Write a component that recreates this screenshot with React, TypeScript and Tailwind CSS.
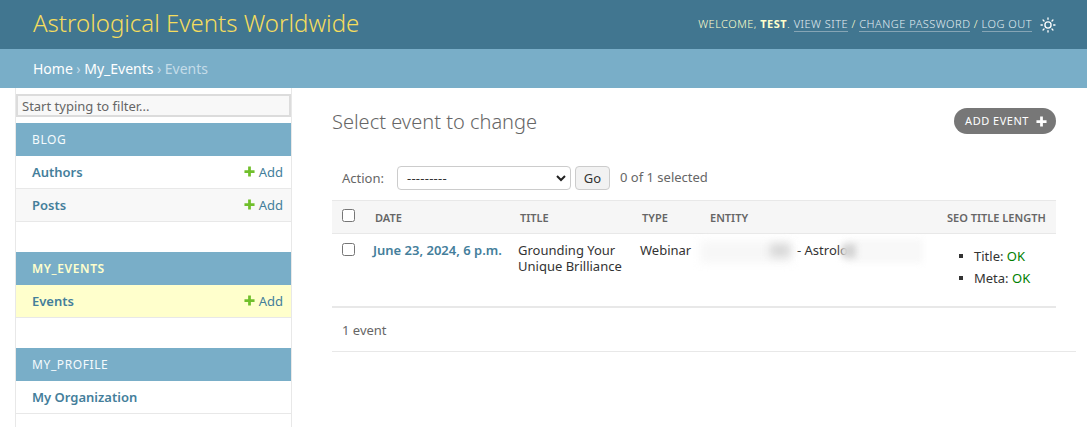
import React from "react";

const font = { fontFamily: '"Noto Sans", sans-serif' };

function Plus({ className }: { className?: string }) {
  return (
    <svg viewBox="0 0 12 12" className={className} aria-hidden="true">
      <path d="M4.5 0.5h3v4h4v3h-4v4h-3v-4h-4v-3h4z" fill="currentColor" />
    </svg>
  );
}

function SideRow({ label, add, tone }: { label: string; add?: boolean; tone?: "alt" | "current" }) {
  const bg = tone === "alt" ? "bg-[#f8f8f8]" : tone === "current" ? "bg-[#ffffcc]" : "bg-white";
  return (
    <div className={`flex h-[33px] items-center justify-between border-b border-[#e8e8e8] pl-4 pr-2 pt-[1px] text-[13px] ${bg}`}>
      <span className="font-semibold text-[#447e9b]">{label}</span>
      {add && (
        <span className="flex items-center gap-[4px] text-[#447e9b]">
          <Plus className="mb-[3px] h-[11px] w-[11px] text-[#70bf2b]" />
          Add
        </span>
      )}
    </div>
  );
}

function SideGroup({ title, current, children }: { title: string; current?: boolean; children: React.ReactNode }) {
  return (
    <div className="mb-[30px]">
      <div className={`flex h-[33px] items-center bg-[#79aec8] pl-4 text-[12px] tracking-[0.6px] ${current ? "font-semibold text-[#ffffcc]" : "text-[#f5fbfd]"}`}>
        {title}
      </div>
      {children}
    </div>
  );
}

export default function App() {
  return (
    <div style={font} className="h-[427px] w-[1087px] overflow-hidden bg-white text-[13px] text-[#333]">
      <header className="flex h-[49px] items-center justify-between bg-[#417690] pl-[33px] pr-[31px]">
        <div className="pb-[3px] text-[24px] font-light leading-none text-[#f5dd5d]">Astrological Events Worldwide</div>
        <div className="flex items-center text-[11px] font-light tracking-[0.5px] text-[#ffffcc]">
          <span>
            WELCOME, <strong className="font-bold">TEST</strong>.{" "}
            <span className="border-b border-[#86a5b5] text-[#e3eef3]">VIEW SITE</span> /{" "}
            <span className="border-b border-[#86a5b5] text-[#e3eef3]">CHANGE PASSWORD</span> /{" "}
            <span className="border-b border-[#86a5b5] text-[#e3eef3]">LOG OUT</span>
          </span>
          <svg viewBox="0 0 24 24" className="ml-[8px] h-[16px] w-[16px] text-white" fill="none" stroke="currentColor" strokeWidth="2" strokeLinecap="round">
            <circle cx="12" cy="12" r="4.6" />
            <path d="M12 1.5v2M12 20.5v2M1.5 12h2M20.5 12h2M4.6 4.6l1.4 1.4M18 18l1.4 1.4M4.6 19.4L6 18M18 6l1.4-1.4" />
          </svg>
        </div>
      </header>

      <div className="flex h-[39px] items-center bg-[#79aec8] pl-[33px] text-[14px] text-[#c4dce8]">
        <span className="text-white">Home</span>
        <span className="mx-[3.5px]">›</span>
        <span className="text-white">My_Events</span>
        <span className="mx-[3.5px]">›</span>
        <span>Events</span>
      </div>

      <div className="flex">
        <aside className="ml-[15px] h-[339px] w-[277px] shrink-0 overflow-hidden border-x border-[#e8e8e8]">
          <div className="mt-[6px] mb-[6px] flex h-[23px] items-center border-2 border-[#dcdcdc] bg-[#f8f8f8] pl-[4px] pt-[2px] text-[13px] text-[#666]">
            Start typing to filter...
          </div>
          <SideGroup title="BLOG">
            <SideRow label="Authors" add />
            <SideRow label="Posts" add tone="alt" />
          </SideGroup>
          <SideGroup title="MY_EVENTS" current>
            <SideRow label="Events" add tone="current" />
          </SideGroup>
          <SideGroup title="MY_PROFILE">
            <SideRow label="My Organization" />
          </SideGroup>
        </aside>

        <main className="ml-[40px] w-[744px]">
          <div className="mr-[20px] mt-[20px] flex h-[26px] items-center justify-between">
            <h1 className="pt-[2px] text-[20px] font-light text-[#666]">Select event to change</h1>
            <div className="flex h-[26px] w-[102px] items-center justify-center gap-[7px] rounded-full bg-[#777] pl-[2px] text-[11px] tracking-[0.5px] text-white">
              ADD EVENT
              <Plus className="h-[11px] w-[11px]" />
            </div>
          </div>

          <div className="ml-[10px] mt-[32px] flex h-[24px] items-center text-[13px] text-[#666]">
            <span className="w-[55px] pt-[1px]">Action:</span>
            <div className="flex h-[24px] w-[174px] items-center justify-between rounded-[4px] border border-[#ccc] bg-white pl-[9px] pr-[3px] text-[#333]">
              <span className="tracking-[0.25px] pt-[1px]">---------</span>
              <svg viewBox="0 0 12 12" className="h-[12px] w-[12px]" fill="none" stroke="#222" strokeWidth="2">
                <path d="M2 4l4 4 4-4" />
              </svg>
            </div>
            <div className="ml-[4px] flex h-[24px] w-[35px] items-center justify-center rounded-[4px] border border-[#ccc] bg-[#f2f2f2] pt-[1px] text-[#333]">Go</div>
            <span className="ml-[10px]">0 of 1 selected</span>
          </div>

          <div className="mr-[20px] mt-[10px]">
            <div className="flex h-[34px] items-center border-y border-[#e8e8e8] bg-[#f6f6f6] pt-[3px] text-[11px] font-semibold text-[#666]">
              <span className="ml-[10px] mb-[7px] h-[13px] w-[13px] rounded-[2.5px] border border-[#767676] bg-white" />
              <span className="ml-[20px] w-[145px]">DATE</span>
              <span className="w-[122px]">TITLE</span>
              <span className="w-[68px]">TYPE</span>
              <span className="w-[237px]">ENTITY</span>
              <span>SEO TITLE LENGTH</span>
            </div>
            <div className="flex h-[74px] items-start border-b-2 border-[#e8e8e8] text-[13px]">
              <span className="ml-[10px] mt-[9px] h-[13px] w-[13px] rounded-[2.5px] border border-[#767676] bg-white" />
              <span className="ml-[18px] mt-[7px] w-[145px] font-semibold text-[#447e9b]">June 23, 2024, 6 p.m.</span>
              <span className="mt-[8px] w-[122px] text-[13px] leading-[16px]">
                Grounding Your
                <br />
                Unique Brilliance
              </span>
              <span className="mt-[7px] w-[64px]">Webinar</span>
              <div className="relative mt-[7px] h-[24px] w-[232px]">
                <span className="absolute left-[93px] top-0">- Astrolo</span>
                <div className="absolute left-[-4px] top-0 h-[22px] w-[92px] bg-[#f7f7f7] blur-[5px]" />
                <div className="absolute left-[66px] top-[3px] h-[13px] w-[20px] bg-[#d8d8d8] blur-[4px]" />
                <div className="absolute left-[141px] top-[-2px] h-[24px] w-[78px] bg-[#f8f8f8] blur-[3px]" />
                <div className="absolute left-[138px] top-[3px] h-[14px] w-[14px] bg-[#d4d4d4] blur-[3px]" />
              </div>
              <ul className="ml-[23px] mt-[14px] space-y-[6px] text-[13px] leading-[16px]">
                <li className="flex items-center">
                  <span className="mr-[11px] h-[4px] w-[4px] bg-[#333]" />
                  Title:&nbsp;<span className="text-[#008000]">OK</span>
                </li>
                <li className="flex items-center">
                  <span className="mr-[11px] h-[4px] w-[4px] bg-[#333]" />
                  Meta:&nbsp;<span className="text-[#008000]">OK</span>
                </li>
              </ul>
            </div>
          </div>

          <div className="flex h-[44px] items-center border-b border-[#e8e8e8] pl-[10px] pt-[3px] text-[13px] text-[#666]">1 event</div>
        </main>
      </div>
    </div>
  );
}
